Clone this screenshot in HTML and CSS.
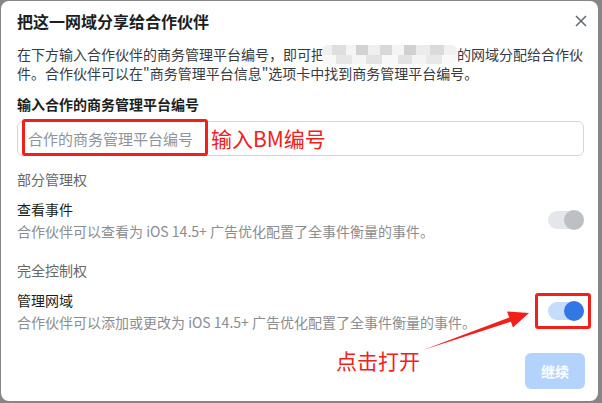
FILE: index.html
```html
<!DOCTYPE html>
<html lang="zh-CN">
<head>
  <meta charset="UTF-8">
  <meta name="viewport" content="width=device-width, initial-scale=1.0">
  <title>把这一网域分享给合作伙伴</title>
  <link rel="stylesheet" href="styles.css">
</head>
<body>
  <div class="dialog">
    <div class="dialog-header">
      <h2>把这一网域分享给合作伙伴</h2>
      <button type="button" class="close" aria-label="关闭">
        <svg width="12" height="12" viewBox="0 0 12 12"><path d="M1 1 L11 11 M11 1 L1 11" stroke="#606770" stroke-width="1.5" fill="none"/></svg>
      </button>
    </div>

    <div class="dialog-body">
      <p class="intro">在下方输入合作伙伴的商务管理平台编号，即可把<span class="masked"></span>的网域分配给合作伙<br>件。合作伙伴可以在"商务管理平台信息"选项卡中找到商务管理平台编号。</p>

      <label class="field-label" for="bm-id">输入合作的商务管理平台编号</label>
      <div class="field">
        <input type="text" id="bm-id" placeholder="合作的商务管理平台编号">
        <span class="mark mark-input"></span>
        <span class="note note-input">输入BM编号</span>
      </div>

      <div class="section-title">部分管理权</div>
      <div class="perm-row">
        <div class="perm-text">
          <div class="perm-name">查看事件</div>
          <div class="perm-desc">合作伙伴可以查看为 iOS 14.5+ 广告优化配置了全事件衡量的事件。</div>
        </div>
        <span class="switch is-locked"><span class="knob"></span></span>
      </div>

      <div class="section-title second">完全控制权</div>
      <div class="perm-row">
        <div class="perm-text">
          <div class="perm-name">管理网域</div>
          <div class="perm-desc">合作伙伴可以添加或更改为 iOS 14.5+ 广告优化配置了全事件衡量的事件。</div>
        </div>
        <span class="switch is-on"><span class="knob"></span><span class="mark mark-switch"></span></span>
      </div>
    </div>

    <div class="dialog-footer">
      <button type="button" class="btn-primary" disabled>继续</button>
    </div>

    <span class="note note-switch">点击打开</span>
    <svg class="arrow" width="597" height="400" viewBox="1 1 597 400">
      <polygon points="423,350 509.3,317.4 507,311.5 529,313 513,327.6 510.9,321.8" fill="#f2201b"/>
    </svg>
  </div>
</body>
</html>
```

FILE: styles.css
```css
html, body {
  margin: 0;
  height: 100%;
}
body {
  background: #868686;
  font-family: "Noto Sans CJK SC", "Noto Sans", sans-serif;
  color: #1c1e21;
}
.dialog {
  position: relative;
  box-sizing: border-box;
  width: 597px;
  height: 400px;
  margin: 1px 0 0 1px;
  background: #fff;
  border-radius: 8px;
  overflow: hidden;
}
.dialog-header {
  display: flex;
  align-items: center;
  justify-content: space-between;
  padding: 10px 11px 14px 16px;
}
.dialog-header h2 {
  margin: 0;
  font-size: 16px;
  line-height: 20px;
  font-weight: 700;
}
.close {
  display: flex;
  padding: 0;
  border: none;
  background: none;
}
.dialog-body {
  padding: 0 14px 0 16px;
}
.intro {
  margin: 0;
  font-size: 14px;
  line-height: 19px;
  color: #373a3f;
}
.masked {
  display: inline-block;
  vertical-align: top;
  width: 135px;
  height: 19px;
  margin-left: -3px;
  border-radius: 6px;
  background:
    linear-gradient(to right, #f0f0f0 0 10px, #dedede 10px 24px, #f4f4f4 24px 34px, #d2d2d2 34px 46px, #efefef 46px 58px, #d8d8d8 58px 70px, #f4f4f4 70px 82px, #d0d0d0 82px 94px, #ececec 94px 108px, #dadada 108px 122px, #f1f1f1 122px 135px) top / 100% 10px no-repeat,
    linear-gradient(to right, #f8f8f8 0 14px, #e6e6e6 14px 30px, #f5f5f5 30px 44px, #e3e3e3 44px 60px, #f8f8f8 60px 76px, #e2e2e2 76px 90px, #f4f4f4 90px 104px, #e8e8e8 104px 120px, #f9f9f9 120px 135px) bottom / 100% 9px no-repeat;
}
.field-label {
  display: block;
  margin-top: 12px;
  font-size: 14px;
  line-height: 19px;
  font-weight: 700;
}
.field {
  position: relative;
  margin-top: 7px;
}
.field input {
  display: block;
  box-sizing: border-box;
  width: 100%;
  height: 35px;
  padding: 0 10px;
  border: 1px solid #d3d6db;
  border-radius: 6px;
  font-family: inherit;
  font-size: 15px;
  outline: none;
}
.field input::placeholder {
  color: #8d949e;
}
.mark {
  position: absolute;
  box-sizing: border-box;
  border: 3px solid #f2201b;
  border-radius: 3px;
}
.mark-input {
  left: 5px;
  top: -2px;
  width: 186px;
  height: 37px;
}
.note {
  position: absolute;
  color: #f2201b;
  font-size: 21px;
  line-height: 26px;
  white-space: nowrap;
}
.note-input {
  left: 194px;
  top: 4px;
}
.note-switch {
  left: 335px;
  top: 346px;
}
.section-title {
  margin-top: 13px;
  font-size: 14px;
  line-height: 20px;
  color: #65676b;
}
.section-title.second {
  margin-top: 19px;
}
.perm-row {
  display: flex;
  align-items: center;
  justify-content: space-between;
  margin-top: 10px;
}
.perm-name {
  font-size: 14px;
  line-height: 20px;
}
.perm-desc {
  margin-top: 2px;
  font-size: 14px;
  line-height: 20px;
  color: #8a8d91;
}
.switch {
  position: relative;
  width: 36px;
  height: 18px;
  border-radius: 9px;
  flex-shrink: 0;
}
.switch .knob {
  position: absolute;
  right: 0;
  top: -1px;
  width: 20px;
  height: 20px;
  border-radius: 50%;
}
.switch.is-locked { background: #e4e6eb; }
.switch.is-locked .knob { background: #bcc0c4; }
.switch.is-on { background: #c5dcfb; }
.switch.is-on .knob { background: #3278e4; }
.mark-switch {
  left: -13px;
  top: -9px;
  width: 56px;
  height: 36px;
}
.dialog-footer {
  display: flex;
  justify-content: flex-end;
  padding: 21px 13px 0 0;
}
.btn-primary {
  width: 60px;
  height: 36px;
  border: none;
  border-radius: 6px;
  background: #b3d3fc;
  color: #fff;
  font-family: inherit;
  font-size: 14px;
  font-weight: 700;
}
.arrow {
  position: absolute;
  left: 0;
  top: 0;
  pointer-events: none;
}
```
